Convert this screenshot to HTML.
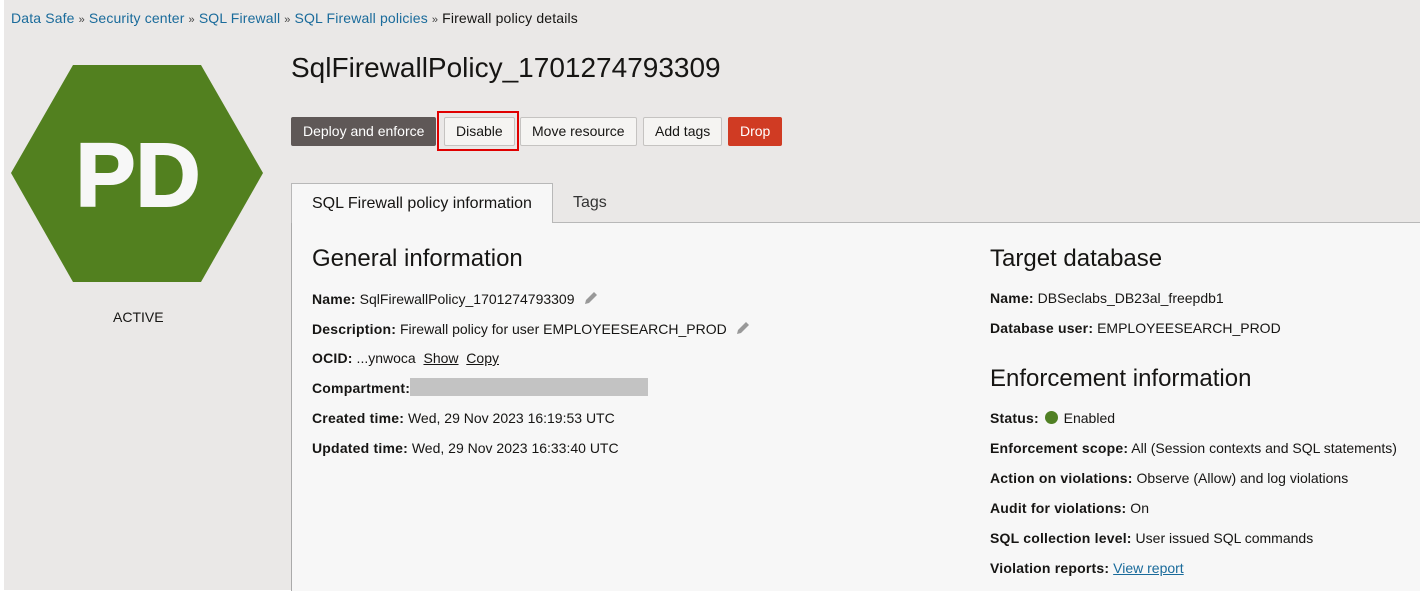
<!DOCTYPE html>
<html><head><meta charset="utf-8"><style>
*{margin:0;padding:0;box-sizing:border-box}
body{width:1424px;height:591px;overflow:hidden;background:#fff;font-family:"Liberation Sans",Arial,sans-serif;color:#161513;position:relative}
.bg{position:absolute;left:4px;top:0;width:1416px;height:590px;background:#eae8e7}
.abs{position:absolute;white-space:nowrap}
.bc{top:10px;left:11px;font-size:14px;color:#161513;letter-spacing:0.15px}
.bc a{color:#1a6b9b;text-decoration:none}
.bc span{font-size:11px;color:#444;margin:0 4px}
h1{position:absolute;left:291px;top:52px;font-size:28px;font-weight:normal;color:#161513}
.btn{position:absolute;top:117px;height:29px;font-size:14px;line-height:27px;padding:0 11px;border:1px solid #c5c3c1;border-radius:2px;background:#f5f4f2;color:#161513}
.panel{position:absolute;left:291px;top:222px;width:1129px;height:369px;background:#f7f7f7;border-left:1px solid #aaa;border-top:1px solid #b8b8b8}
.tab{position:absolute;left:291px;top:183px;width:262px;height:40px;background:#f7f7f7;border:1px solid #b8b8b8;border-bottom:none;font-size:16px;line-height:39px;padding-left:20px}
h2{position:absolute;font-size:24px;font-weight:normal;color:#161513}
.r{position:absolute;font-size:14px;white-space:nowrap}
.r b{font-weight:bold;letter-spacing:0.2px}
.u{text-decoration:underline;color:#161513}
.pen{display:inline-block;vertical-align:-2px;margin-left:8px}
</style></head><body>
<div class="bg"></div>
<div class="abs bc"><a>Data Safe</a><span>»</span><a>Security center</a><span>»</span><a>SQL Firewall</a><span>»</span><a>SQL Firewall policies</a><span>»</span>Firewall policy details</div>
<svg class="abs" style="left:11px;top:65px" width="253" height="218"><polygon points="62,0 190,0 252,108 190,217 62,217 0,108" fill="#52801f"/><text x="127" y="141" text-anchor="middle" font-family="Liberation Sans,Arial,sans-serif" font-weight="bold" font-size="90" fill="#f7f7f7" stroke="#f7f7f7" stroke-width="2">PD</text></svg>
<div class="abs" style="left:113px;top:309px;font-size:14px">ACTIVE</div>
<h1>SqlFirewallPolicy_1701274793309</h1>
<div class="btn" style="left:291px;background:#5f5857;border-color:#5f5857;color:#fff">Deploy and enforce</div>
<div class="abs" style="left:437px;top:111px;width:82px;height:40px;border:2px solid #e00000"></div>
<div class="btn" style="left:444px">Disable</div>
<div class="btn" style="left:520px">Move resource</div>
<div class="btn" style="left:643px">Add tags</div>
<div class="btn" style="left:728px;background:#d03b23;border-color:#d03b23;color:#fff">Drop</div>
<div class="panel"></div>
<div class="tab">SQL Firewall policy information</div>
<div class="abs" style="left:573px;top:194px;font-size:16px;color:#333">Tags</div>
<h2 style="left:312px;top:245px">General information</h2>
<div class="r" style="left:312px;top:290px"><b>Name:</b> SqlFirewallPolicy_1701274793309<svg class="pen" width="16" height="16" viewBox="0 0 16 16"><path d="M2 14l1-4 8-8 3 3-8 8z" fill="#999"/></svg></div>
<div class="r" style="left:312px;top:320px"><b>Description:</b> Firewall policy for user EMPLOYEESEARCH_PROD<svg class="pen" width="16" height="16" viewBox="0 0 16 16"><path d="M2 14l1-4 8-8 3 3-8 8z" fill="#999"/></svg></div>
<div class="r" style="left:312px;top:350px"><b>OCID:</b> ...ynwoca &nbsp;<span class="u">Show</span> &nbsp;<span class="u">Copy</span></div>
<div class="r" style="left:312px;top:380px"><b>Compartment:</b></div>
<div class="abs" style="left:410px;top:378px;width:238px;height:18px;background:#c3c3c3"></div>
<div class="r" style="left:312px;top:410px"><b>Created time:</b> Wed, 29 Nov 2023 16:19:53 UTC</div>
<div class="r" style="left:312px;top:440px"><b>Updated time:</b> Wed, 29 Nov 2023 16:33:40 UTC</div>
<h2 style="left:990px;top:245px">Target database</h2>
<div class="r" style="left:990px;top:290px"><b>Name:</b> DBSeclabs_DB23al_freepdb1</div>
<div class="r" style="left:990px;top:320px"><b>Database user:</b> EMPLOYEESEARCH_PROD</div>
<h2 style="left:990px;top:365px">Enforcement information</h2>
<div class="r" style="left:990px;top:410px"><b>Status:</b> <span style="display:inline-block;width:13px;height:13px;border-radius:50%;background:#508024;vertical-align:-1px;margin:0 2px"></span> Enabled</div>
<div class="r" style="left:990px;top:440px"><b>Enforcement scope:</b> All (Session contexts and SQL statements)</div>
<div class="r" style="left:990px;top:470px"><b>Action on violations:</b> Observe (Allow) and log violations</div>
<div class="r" style="left:990px;top:500px"><b>Audit for violations:</b> On</div>
<div class="r" style="left:990px;top:530px"><b>SQL collection level:</b> User issued SQL commands</div>
<div class="r" style="left:990px;top:560px"><b>Violation reports:</b> <span style="color:#1a6b9b;text-decoration:underline">View report</span></div>
</body></html>
